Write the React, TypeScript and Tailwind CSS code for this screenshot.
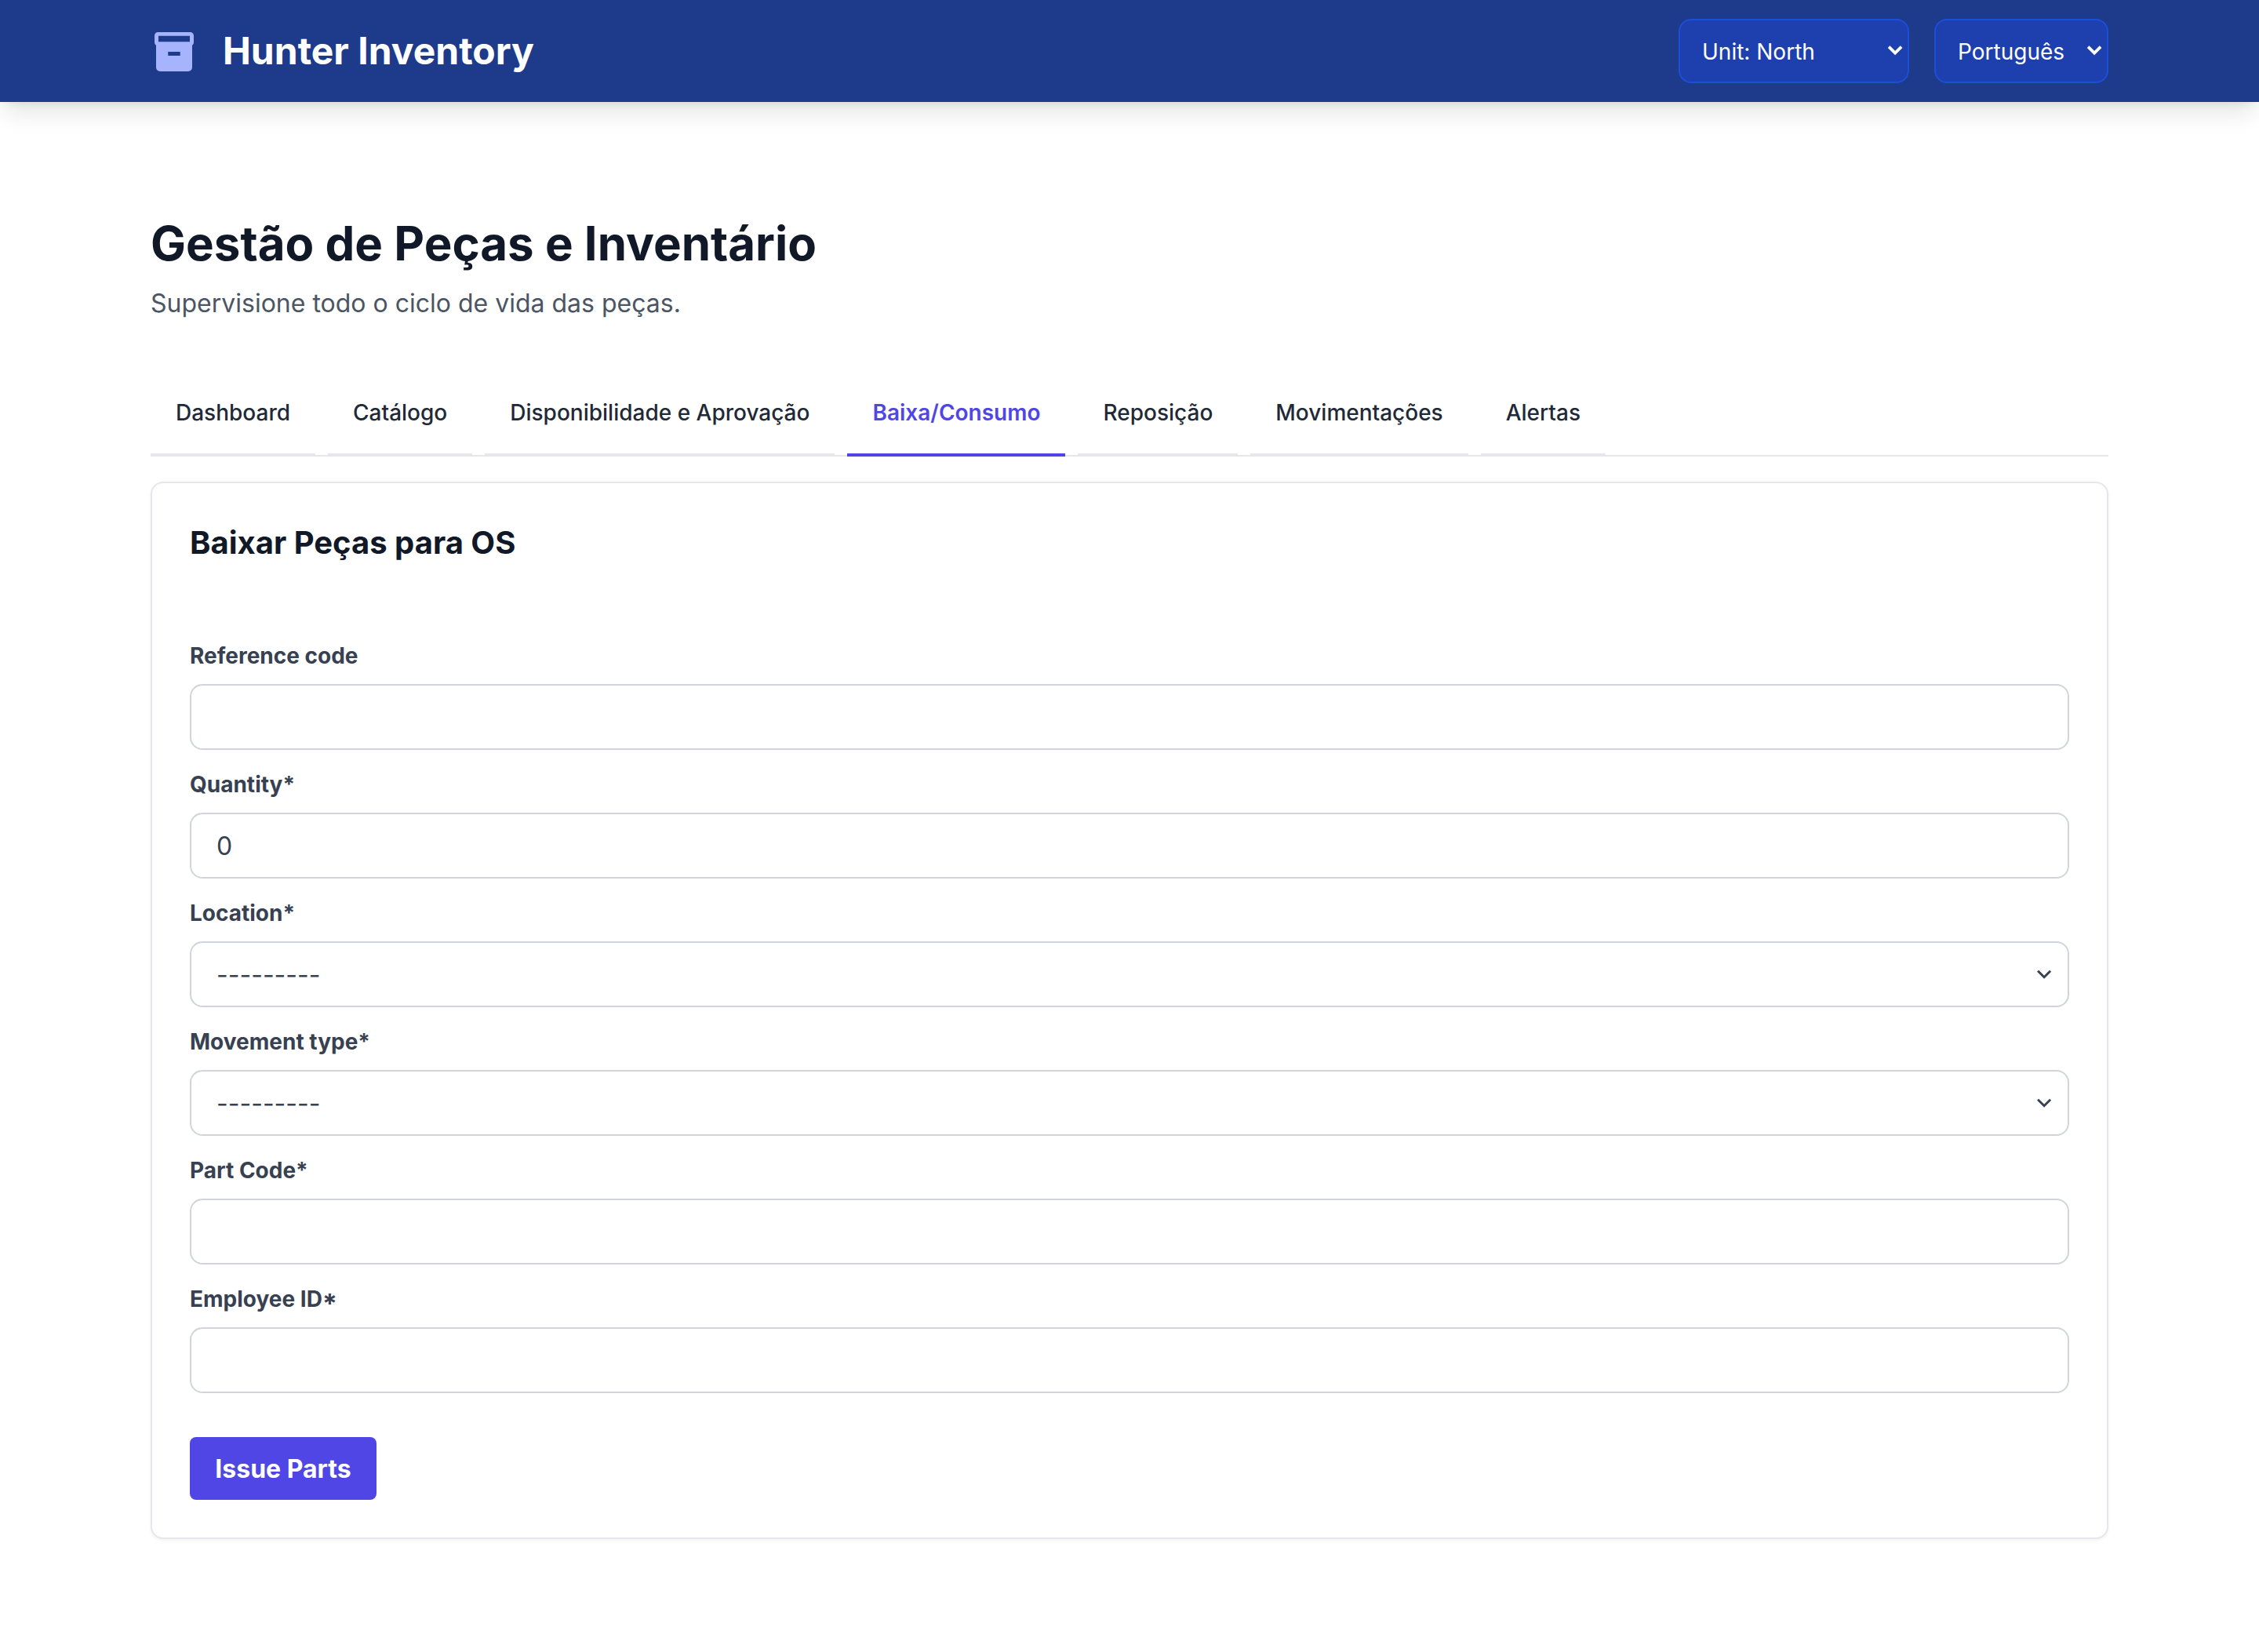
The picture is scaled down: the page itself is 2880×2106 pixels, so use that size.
import React from "react";

const tabs = [
  "Dashboard",
  "Catálogo",
  "Disponibilidade e Aprovação",
  "Baixa/Consumo",
  "Reposição",
  "Movimentações",
  "Alertas",
];

type Field = { label: string; kind: "input" | "select"; value: string };

const fields: Field[] = [
  { label: "Reference code", kind: "input", value: "" },
  { label: "Quantity*", kind: "input", value: "0" },
  { label: "Location*", kind: "select", value: "---------" },
  { label: "Movement type*", kind: "select", value: "---------" },
  { label: "Part Code*", kind: "input", value: "" },
  { label: "Employee ID*", kind: "input", value: "" },
];

function Chevron({ className }: { className: string }) {
  return (
    <svg viewBox="0 0 20 12" fill="none" stroke="currentColor" className={className}>
      <path d="M2.1 1.7l8 8 8-8" />
    </svg>
  );
}

function BoxIcon() {
  return (
    <svg viewBox="0 0 60 60" className="size-[60px] text-[#a5b4fc]" fill="currentColor">
      <path
        fillRule="evenodd"
        d="M9.5 6h41A4.5 4.5 0 0 1 55 10.5V18.5c0 2-.7 3.5-2 4.3V51a5 5 0 0 1-5 5H12a5 5 0 0 1-5-5V22.8C5.7 22 5 20.5 5 18.5V10.500A4.5 4.5 0 0 1 9.5 6Zm.5 4.8v7.5h40v-7.5H10Zm12.3 20.2v5h15.4v-5H22.3Z"
      />
    </svg>
  );
}

function HeaderSelect({ text, className }: { text: string; className: string }) {
  return (
    <div className={className}>
      <select className="h-[82px] w-full appearance-none rounded-2xl border-2 border-[#1d4ed8] bg-[#1e40af] pt-0.5 pl-7 text-[28px] text-white">
        <option>{text}</option>
      </select>
      <Chevron className="pointer-events-none absolute top-[34px] right-2 h-3 w-5 overflow-visible stroke-[3.75px] text-white" />
    </div>
  );
}

export default function App() {
  return (
    <div className="min-h-[2106px] bg-white font-['Inter',sans-serif] [font-variation-settings:'opsz'_14]">
      <header className="relative bg-[#1e3a8a] shadow-[0_20px_30px_-6px_rgba(0,0,0,0.1),0_8px_12px_-8px_rgba(0,0,0,0.1)]">
        <div className="mx-auto flex h-[130px] max-w-[2560px] items-center justify-between px-8">
          <div className="flex items-center gap-8">
            <BoxIcon />
            <span className="text-[48px] leading-[64px] font-bold text-white">Hunter Inventory</span>
          </div>
          <div className="flex gap-8">
            <HeaderSelect text="Unit: North" className="relative w-[294px]" />
            <HeaderSelect text="Português" className="relative w-[222px]" />
          </div>
        </div>
      </header>

      <main className="mx-auto max-w-[2560px] px-8 pt-36">
        <h1 className="text-[60px] leading-[72px] font-bold text-[#111827]">
          Gestão de Peças e Inventário
        </h1>
        <p className="mt-[17px] text-[32px] leading-[48px] text-[#4b5563]">
          Supervisione todo o ciclo de vida das peças.
        </p>

        <nav className="mt-[63px] flex gap-4 border-b-2 border-[#e5e7eb]">
          {tabs.map((tab) => (
            <a
              key={tab}
              className={
                tab === "Baixa/Consumo"
                  ? "-mb-0.5 border-b-4 border-[#4f46e5] p-8 text-[28px] leading-10 font-semibold text-[#4f46e5]"
                  : "-mb-0.5 border-b-4 border-[#e5e7eb] p-8 text-[28px] leading-10 font-medium text-[#1f2937]"
              }
            >
              {tab}
            </a>
          ))}
        </nav>

        <section className="mt-8 rounded-2xl border-2 border-[#e5e7eb] bg-white p-12 shadow-[0_2px_4px_0_rgba(0,0,0,0.05)]">
          <h2 className="text-[40px] leading-[56px] font-bold text-[#111827]">
            Baixar Peças para OS
          </h2>
          <form className="mt-24">
            <div className="flex flex-col gap-6">
              {fields.map((field) => (
                <label key={field.label} className="flex flex-col gap-4">
                  <span
                    className={
                      field.label.endsWith("ID*")
                        ? "text-[28px] leading-10 font-bold text-[#374151] [font-feature-settings:'case']"
                        : "text-[28px] leading-10 font-bold text-[#374151]"
                    }
                  >
                    {field.label}
                  </span>
                  {field.kind === "input" ? (
                    <input
                      defaultValue={field.value}
                      className="h-[84px] w-full rounded-2xl border-2 border-[#d1d5db] bg-white px-8 text-[32px] text-[#374151]"
                    />
                  ) : (
                    <span className="relative block">
                      <select className="block h-[84px] w-full appearance-none rounded-2xl border-2 border-[#d1d5db] bg-white px-8 pt-0.5 text-[32px] text-[#374151]">
                        <option>{field.value}</option>
                      </select>
                      <Chevron className="pointer-events-none absolute top-9 right-[22px] h-3 w-5 overflow-visible stroke-3 text-[#374151]" />
                    </span>
                  )}
                </label>
              ))}
            </div>
            <button
              type="button"
              className="mt-14 block h-20 w-[238px] rounded-lg bg-[#4f46e5] pt-0.5 text-[32px] leading-[48px] font-bold text-white"
            >
              Issue Parts
            </button>
          </form>
        </section>
      </main>
    </div>
  );
}
